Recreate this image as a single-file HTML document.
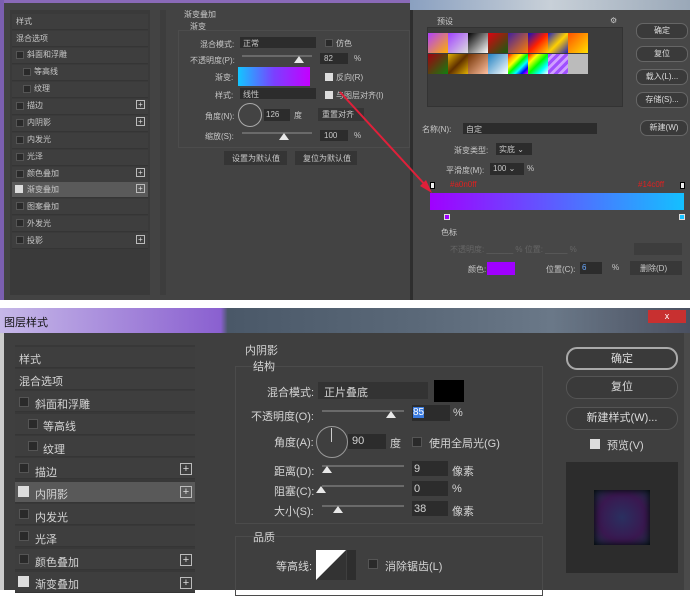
<!DOCTYPE html>
<html><head><meta charset="utf-8"><style>
*{margin:0;padding:0;box-sizing:border-box}
body{width:690px;height:590px;overflow:hidden;background:#fff;font-family:"Liberation Sans","Noto Sans CJK SC",sans-serif;color:#d0d0d0;position:relative}
.a{position:absolute;white-space:nowrap}
.t{font-size:8px;color:#c8c8c8}
.T{font-size:11px;color:#d4d4d4}
.row{position:absolute;background:#3e3e3e;border-bottom:1px solid #353535}
.cb{position:absolute;width:8px;height:8px;background:#2a2a2a;border:1px solid #555}
.cbon{background:#ddd;border-color:#ddd}
.pl{position:absolute;width:9px;height:9px;border:1px solid #bbb;font-size:8px;line-height:7px;text-align:center;color:#ddd}
.inp{position:absolute;background:#2c2c2c}
.btn{position:absolute;background:#3a3a3a;border:1px solid #666;border-radius:7px;text-align:center;color:#ddd}
.sl{position:absolute;height:2px;background:#6a6a6a}
.tri{position:absolute;width:0;height:0;border-left:5px solid transparent;border-right:5px solid transparent;border-bottom:7px solid #e8e8e8}
</style></head><body>
<!-- TOP -->
<div class="a" style="left:0;top:0;width:410px;height:300px;background:#434343"></div>
<div class="a" style="left:0;top:0;width:410px;height:3px;background:#8a6ab8"></div>
<div class="a" style="left:0;top:0;width:4px;height:300px;background:#7b5fb0"></div>
<div class="a" style="left:10px;top:10px;width:140px;height:285px;background:#3a3a3a"></div>
<div class="a" style="left:160px;top:10px;width:6px;height:285px;background:#3d3d3d"></div>
<div class="row" style="left:12px;top:14px;width:136px;height:16px"></div><div class="a t" style="left:16px;top:16px">样式</div>
<div class="row" style="left:12px;top:31px;width:136px;height:16px"></div><div class="a t" style="left:16px;top:33px">混合选项</div>
<div class="row" style="left:12px;top:48px;width:136px;height:16px"></div><div class="cb" style="left:16px;top:51px"></div><div class="a t" style="left:27px;top:49px">斜面和浮雕</div>
<div class="row" style="left:12px;top:65px;width:136px;height:16px"></div><div class="cb" style="left:23px;top:68px"></div><div class="a t" style="left:34px;top:66px">等高线</div>
<div class="row" style="left:12px;top:82px;width:136px;height:16px"></div><div class="cb" style="left:23px;top:85px"></div><div class="a t" style="left:34px;top:83px">纹理</div>
<div class="row" style="left:12px;top:99px;width:136px;height:16px"></div><div class="cb" style="left:16px;top:102px"></div><div class="a t" style="left:27px;top:100px">描边</div><div class="pl" style="left:136px;top:100px">+</div>
<div class="row" style="left:12px;top:116px;width:136px;height:16px"></div><div class="cb" style="left:16px;top:119px"></div><div class="a t" style="left:27px;top:117px">内阴影</div><div class="pl" style="left:136px;top:117px">+</div>
<div class="row" style="left:12px;top:133px;width:136px;height:16px"></div><div class="cb" style="left:16px;top:136px"></div><div class="a t" style="left:27px;top:134px">内发光</div>
<div class="row" style="left:12px;top:150px;width:136px;height:16px"></div><div class="cb" style="left:16px;top:153px"></div><div class="a t" style="left:27px;top:151px">光泽</div>
<div class="row" style="left:12px;top:167px;width:136px;height:16px"></div><div class="cb" style="left:16px;top:170px"></div><div class="a t" style="left:27px;top:168px">颜色叠加</div><div class="pl" style="left:136px;top:168px">+</div>
<div class="row" style="left:12px;top:182px;width:136px;height:16px;background:#5a5a5a"></div><div class="cb cbon" style="left:15px;top:185px"></div><div class="a t" style="left:27px;top:184px">渐变叠加</div><div class="pl" style="left:136px;top:184px">+</div>
<div class="row" style="left:12px;top:199px;width:136px;height:16px"></div><div class="cb" style="left:16px;top:202px"></div><div class="a t" style="left:27px;top:201px">图案叠加</div>
<div class="row" style="left:12px;top:216px;width:136px;height:16px"></div><div class="cb" style="left:16px;top:219px"></div><div class="a t" style="left:27px;top:218px">外发光</div>
<div class="row" style="left:12px;top:233px;width:136px;height:16px"></div><div class="cb" style="left:16px;top:236px"></div><div class="a t" style="left:27px;top:235px">投影</div><div class="pl" style="left:136px;top:235px">+</div>
<div class="a t" style="left:184px;top:9px">渐变叠加</div>
<div class="a t" style="left:190px;top:21px">渐变</div>
<div class="a" style="left:178px;top:30px;width:232px;height:118px;border:1px solid #4c4c4c"></div>
<div class="a t" style="left:200px;top:39px">混合模式:</div><div class="inp" style="left:240px;top:37px;width:76px;height:11px"></div><div class="a t" style="left:243px;top:38px">正常</div>
<div class="cb" style="left:325px;top:39px"></div><div class="a t" style="left:336px;top:38px">仿色</div>
<div class="a t" style="left:190px;top:55px">不透明度(P):</div><div class="sl" style="left:242px;top:55px;width:70px"></div><div class="tri" style="left:294px;top:56px"></div><div class="inp" style="left:320px;top:53px;width:28px;height:11px"></div><div class="a t" style="left:324px;top:54px">82</div><div class="a t" style="left:354px;top:54px">%</div>
<div class="a t" style="left:215px;top:72px">渐变:</div><div class="a" style="left:238px;top:67px;width:72px;height:19px;background:linear-gradient(90deg,#12c6ff,#7a40ff,#c400ff)"></div>
<div class="cb cbon" style="left:325px;top:73px"></div><div class="a t" style="left:336px;top:72px">反向(R)</div>
<div class="a t" style="left:215px;top:90px">样式:</div><div class="inp" style="left:240px;top:88px;width:76px;height:11px"></div><div class="a t" style="left:243px;top:89px">线性</div>
<div class="cb cbon" style="left:325px;top:91px"></div><div class="a t" style="left:336px;top:90px">与图层对齐(I)</div>
<div class="a t" style="left:205px;top:111px">角度(N):</div><div class="a" style="left:238px;top:103px;width:24px;height:24px;border:1px solid #aaa;border-radius:50%"></div>
<div class="inp" style="left:264px;top:109px;width:26px;height:12px"></div><div class="a t" style="left:266px;top:110px">126</div><div class="a t" style="left:294px;top:110px">度</div>
<div class="a" style="left:318px;top:108px;width:46px;height:13px;background:#353535"></div><div class="a t" style="left:322px;top:109px">重置对齐</div>
<div class="a t" style="left:205px;top:131px">缩放(S):</div><div class="sl" style="left:242px;top:132px;width:70px"></div><div class="tri" style="left:279px;top:133px"></div><div class="inp" style="left:320px;top:130px;width:28px;height:11px"></div><div class="a t" style="left:324px;top:131px">100</div><div class="a t" style="left:354px;top:131px">%</div>
<div class="a" style="left:224px;top:151px;width:63px;height:14px;background:#353535"></div><div class="a t" style="left:232px;top:153px">设置为默认值</div>
<div class="a" style="left:295px;top:151px;width:62px;height:14px;background:#353535"></div><div class="a t" style="left:303px;top:153px">复位为默认值</div>
<!-- gradient editor -->
<div class="a" style="left:410px;top:0;width:280px;height:300px;background:#474747;border-left:3px solid #2e2e2e"></div>
<div class="a" style="left:410px;top:0;width:280px;height:10px;background:linear-gradient(90deg,#8aa0c0,#c8d0d8,#9aa8b8)"></div>
<div class="a" style="left:427px;top:27px;width:196px;height:80px;background:#3c3c3c;border:1px solid #333"></div>
<div class="a t" style="left:437px;top:16px">预设</div><div class="a t" style="left:610px;top:16px">⚙</div>
<div class="a" style="left:428px;top:33px;width:160px;height:41px;display:grid;grid-template-columns:repeat(8,20px);grid-auto-rows:20px;gap:1px 0">
<div style="background:linear-gradient(135deg,#b040ff,#ffb000)"></div><div style="background:linear-gradient(135deg,#a040ff,#ddd)"></div><div style="background:linear-gradient(135deg,#000,#fff)"></div><div style="background:linear-gradient(135deg,#e00010,#106010)"></div><div style="background:linear-gradient(135deg,#4020a0,#ff8000)"></div><div style="background:linear-gradient(135deg,#1010c0,#ff2000,#ffd000)"></div><div style="background:linear-gradient(135deg,#2020c0,#ffd000,#2020c0)"></div><div style="background:linear-gradient(135deg,#ff5000,#ffe000)"></div>
<div style="background:linear-gradient(135deg,#a00010,#108010)"></div><div style="background:linear-gradient(135deg,#e0b000,#603000,#e0b000)"></div><div style="background:linear-gradient(135deg,#703000,#ffc0a0)"></div><div style="background:linear-gradient(135deg,#2080c0,#fff)"></div><div style="background:linear-gradient(135deg,red,orange,yellow,lime,cyan,blue,magenta)"></div><div style="background:linear-gradient(135deg,red,yellow,lime,cyan,#fff)"></div><div style="background:repeating-linear-gradient(135deg,#a050ff 0 3px,#d0a0ff 3px 6px)"></div><div style="background:#bbb"></div></div>
<div class="btn t" style="left:636px;top:23px;width:52px;height:16px;line-height:14px">确定</div>
<div class="btn t" style="left:636px;top:46px;width:52px;height:16px;line-height:14px">复位</div>
<div class="btn t" style="left:636px;top:69px;width:52px;height:16px;line-height:14px">载入(L)...</div>
<div class="btn t" style="left:636px;top:92px;width:52px;height:16px;line-height:14px">存储(S)...</div>
<div class="btn t" style="left:640px;top:120px;width:48px;height:16px;line-height:14px">新建(W)</div>
<div class="a t" style="left:422px;top:124px">名称(N):</div><div class="inp" style="left:463px;top:123px;width:134px;height:11px"></div><div class="a t" style="left:466px;top:124px">自定</div>
<div class="a t" style="left:454px;top:145px">渐变类型:</div><div class="inp" style="left:496px;top:143px;width:36px;height:12px"></div><div class="a t" style="left:499px;top:144px">实底 ⌄</div>
<div class="a t" style="left:446px;top:165px">平滑度(M):</div><div class="inp" style="left:490px;top:163px;width:34px;height:12px"></div><div class="a t" style="left:493px;top:164px">100 ⌄</div><div class="a t" style="left:527px;top:164px">%</div>
<div class="a" style="left:430px;top:182px;width:5px;height:7px;background:#eee;border:1px solid #000"></div>
<div class="a" style="left:680px;top:182px;width:5px;height:7px;background:#eee;border:1px solid #000"></div>
<div class="a" style="left:450px;top:180px;font-size:8px;color:#e02020">#a0n0ff</div>
<div class="a" style="left:638px;top:180px;font-size:8px;color:#e02020">#14c0ff</div>
<div class="a" style="left:430px;top:193px;width:254px;height:17px;background:linear-gradient(90deg,#a000ff,#14c0ff)"></div>
<div class="a" style="left:444px;top:214px;width:6px;height:6px;background:#a000ff;border:1px solid #ddd"></div>
<div class="a" style="left:679px;top:214px;width:6px;height:6px;background:#14c0ff;border:1px solid #ddd"></div>
<div class="a t" style="left:441px;top:227px">色标</div>
<div class="a t" style="left:450px;top:244px;color:#666">不透明度: ______ %   位置: _____ %</div>
<div class="a" style="left:634px;top:243px;width:48px;height:12px;background:#3d3d3d"></div>
<div class="a t" style="left:468px;top:264px">颜色:</div><div class="a" style="left:487px;top:262px;width:28px;height:13px;background:#a000ff"></div>
<div class="a t" style="left:546px;top:264px">位置(C):</div><div class="inp" style="left:580px;top:262px;width:22px;height:12px"></div><div class="a t" style="left:582px;top:263px;color:#6aaaff">6</div><div class="a t" style="left:612px;top:263px">%</div>
<div class="a" style="left:630px;top:261px;width:52px;height:14px;background:#383838"></div><div class="a t" style="left:640px;top:263px">删除(D)</div>
<svg class="a" style="left:0;top:0" width="690" height="300"><line x1="340" y1="92" x2="428" y2="188" stroke="#e0203a" stroke-width="2"/><polygon points="432,193 420,186 426,180" fill="#e0203a"/></svg>
<!-- BOTTOM -->
<div class="a" style="left:0;top:308px;width:690px;height:282px;background:#3f3f3f"></div>
<div class="a" style="left:0;top:308px;width:690px;height:25px;background:linear-gradient(90deg,#c6b8e8,#8a60d0 32%,#4a5868 33%,#5a6878 60%,#6a7888 80%,#4a5060)"></div>
<div class="a" style="left:4px;top:314px;font-size:11px;color:#111">图层样式</div>
<div class="a" style="left:648px;top:310px;width:38px;height:13px;background:#c83030;color:#fff;font-size:9px;text-align:center;line-height:13px">x</div>
<div class="a" style="left:0;top:333px;width:4px;height:257px;background:#ccc"></div>
<div class="a" style="left:15px;top:345px;width:180px;height:245px;background:#383838"></div>
<div class="row" style="left:15px;top:347px;width:180px;height:21px"></div><div class="a T" style="left:19px;top:351px">样式</div>
<div class="row" style="left:15px;top:369px;width:180px;height:21px"></div><div class="a T" style="left:19px;top:373px">混合选项</div>
<div class="row" style="left:15px;top:391px;width:180px;height:21px"></div><div class="cb" style="left:19px;top:397px;width:10px;height:10px"></div><div class="a T" style="left:35px;top:396px">斜面和浮雕</div>
<div class="row" style="left:15px;top:414px;width:180px;height:21px"></div><div class="cb" style="left:28px;top:419px;width:10px;height:10px"></div><div class="a T" style="left:43px;top:418px">等高线</div>
<div class="row" style="left:15px;top:436px;width:180px;height:21px"></div><div class="cb" style="left:28px;top:441px;width:10px;height:10px"></div><div class="a T" style="left:43px;top:441px">纹理</div>
<div class="row" style="left:15px;top:458px;width:180px;height:21px"></div><div class="cb" style="left:19px;top:463px;width:10px;height:10px"></div><div class="a T" style="left:35px;top:464px">描边</div><div class="pl" style="left:180px;top:463px;width:12px;height:12px;line-height:10px;font-size:11px">+</div>
<div class="row" style="left:15px;top:482px;width:180px;height:21px;background:#595959"></div><div class="cb cbon" style="left:18px;top:486px;width:11px;height:11px"></div><div class="a T" style="left:35px;top:486px">内阴影</div><div class="pl" style="left:180px;top:486px;width:12px;height:12px;line-height:10px;font-size:11px">+</div>
<div class="row" style="left:15px;top:504px;width:180px;height:21px"></div><div class="cb" style="left:19px;top:509px;width:10px;height:10px"></div><div class="a T" style="left:35px;top:509px">内发光</div>
<div class="row" style="left:15px;top:526px;width:180px;height:21px"></div><div class="cb" style="left:19px;top:531px;width:10px;height:10px"></div><div class="a T" style="left:35px;top:531px">光泽</div>
<div class="row" style="left:15px;top:549px;width:180px;height:21px"></div><div class="cb" style="left:19px;top:554px;width:10px;height:10px"></div><div class="a T" style="left:35px;top:554px">颜色叠加</div><div class="pl" style="left:180px;top:554px;width:12px;height:12px;line-height:10px;font-size:11px">+</div>
<div class="row" style="left:15px;top:572px;width:180px;height:21px"></div><div class="cb cbon" style="left:18px;top:576px;width:11px;height:11px"></div><div class="a T" style="left:35px;top:576px">渐变叠加</div><div class="pl" style="left:180px;top:577px;width:12px;height:12px;line-height:10px;font-size:11px">+</div>
<div class="a T" style="left:245px;top:342px">内阴影</div>
<div class="a" style="left:235px;top:366px;width:308px;height:158px;border:1px solid #4b4b4b"></div>
<div class="a T" style="left:253px;top:358px">结构</div>
<div class="a T" style="left:267px;top:384px">混合模式:</div><div class="inp" style="left:318px;top:382px;width:110px;height:17px;background:#333"></div><div class="a T" style="left:324px;top:384px">正片叠底</div><div class="a" style="left:434px;top:380px;width:30px;height:22px;background:#000"></div>
<div class="a T" style="left:251px;top:408px">不透明度(O):</div><div class="sl" style="left:322px;top:410px;width:82px"></div><div class="tri" style="left:386px;top:411px"></div><div class="inp" style="left:412px;top:405px;width:38px;height:16px"></div><div class="a" style="left:413px;top:407px;font-size:10px;background:#3a7be0;color:#fff">85</div><div class="a T" style="left:453px;top:407px">%</div>
<div class="a T" style="left:274px;top:434px">角度(A):</div><div class="a" style="left:316px;top:426px;width:32px;height:32px;border:1px solid #999;border-radius:50%"></div><div class="a" style="left:331px;top:428px;width:1px;height:14px;background:#ccc"></div>
<div class="inp" style="left:348px;top:434px;width:38px;height:15px"></div><div class="a T" style="left:352px;top:435px">90</div><div class="a T" style="left:390px;top:435px">度</div>
<div class="cb" style="left:412px;top:437px;width:10px;height:10px"></div><div class="a T" style="left:429px;top:435px">使用全局光(G)</div>
<div class="a T" style="left:274px;top:463px">距离(D):</div><div class="sl" style="left:322px;top:465px;width:82px"></div><div class="tri" style="left:322px;top:466px"></div><div class="inp" style="left:412px;top:461px;width:36px;height:15px"></div><div class="a T" style="left:414px;top:463px">9</div><div class="a T" style="left:452px;top:463px">像素</div>
<div class="a T" style="left:274px;top:483px">阻塞(C):</div><div class="sl" style="left:322px;top:485px;width:82px"></div><div class="tri" style="left:316px;top:486px"></div><div class="inp" style="left:412px;top:481px;width:36px;height:15px"></div><div class="a T" style="left:414px;top:483px">0</div><div class="a T" style="left:452px;top:483px">%</div>
<div class="a T" style="left:274px;top:503px">大小(S):</div><div class="sl" style="left:322px;top:505px;width:82px"></div><div class="tri" style="left:333px;top:506px"></div><div class="inp" style="left:412px;top:501px;width:36px;height:15px"></div><div class="a T" style="left:414px;top:503px">38</div><div class="a T" style="left:452px;top:503px">像素</div>
<div class="a" style="left:235px;top:536px;width:308px;height:60px;border:1px solid #4b4b4b"></div>
<div class="a T" style="left:253px;top:529px">品质</div>
<div class="a T" style="left:276px;top:558px">等高线:</div>
<svg class="a" style="left:316px;top:550px" width="40" height="30"><rect width="30" height="30" fill="#333"/><polygon points="0,30 30,0 0,0" fill="#fff"/><polygon points="0,30 30,0 30,30" fill="#333"/><polygon points="0,30 0,0 30,0" fill="#fff"/><rect x="31" width="9" height="30" fill="#2e2e2e"/></svg>
<div class="cb" style="left:368px;top:559px;width:10px;height:10px"></div><div class="a T" style="left:385px;top:558px">消除锯齿(L)</div>
<div class="btn T" style="left:566px;top:347px;width:112px;height:23px;line-height:21px;border:2px solid #aaa;border-radius:11px">确定</div>
<div class="btn T" style="left:566px;top:376px;width:112px;height:23px;line-height:21px;border-radius:11px;border-color:#555">复位</div>
<div class="btn T" style="left:566px;top:407px;width:112px;height:23px;line-height:21px;border-radius:11px;border-color:#555">新建样式(W)...</div>
<div class="cb cbon" style="left:590px;top:439px;width:10px;height:10px"></div><div class="a T" style="left:607px;top:437px">预览(V)</div>
<div class="a" style="left:566px;top:462px;width:112px;height:111px;background:#2c2c2c"></div>
<div class="a" style="left:594px;top:490px;width:56px;height:55px;background:radial-gradient(circle at 50% 50%,#2a3060,#3a1850 60%,#1a3040);box-shadow:inset 0 0 8px #000"></div>
<div class="a" style="left:684px;top:333px;width:6px;height:257px;background:#4a4a4a"></div>
</body></html>
